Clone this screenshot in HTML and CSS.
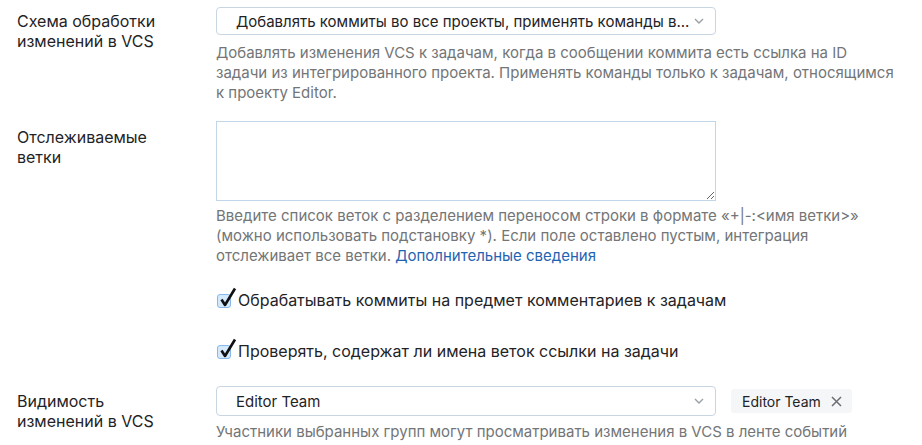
FILE: index.html
```html
<!DOCTYPE html>
<html lang="ru">
<head>
<meta charset="utf-8">
<title>VCS</title>
<link rel="stylesheet" href="styles.css">
</head>
<body>
<div class="form">
  <div class="row">
    <div class="label">Схема обработки изменений в VCS</div>
    <div class="control">
      <div class="select">
        <span class="select-text">Добавлять коммиты во все проекты, применять команды в...</span>
        <svg class="chevron" width="10" height="6" viewBox="0 0 10 6"><path d="M1 1l4 4 4-4" fill="none" stroke="#9aa0a6" stroke-width="1.4"/></svg>
      </div>
      <div class="help">Добавлять изменения VCS к задачам, когда в сообщении коммита есть ссылка на ID<br>задачи из интегрированного проекта. Применять команды только к задачам, относящимся<br>к проекту Editor.</div>
    </div>
  </div>

  <div class="row row-branches">
    <div class="label label-branches">Отслеживаемые ветки</div>
    <div class="control">
      <textarea class="textarea"></textarea>
      <div class="help help-tight">Введите список веток с разделением переносом строки в формате «+|-:&lt;имя ветки&gt;»<br>(можно использовать подстановку *). Если поле оставлено пустым, интеграция<br>отслеживает все ветки. <a class="link" href="#">Дополнительные сведения</a></div>
    </div>
  </div>

  <div class="row row-check1">
    <div class="label"></div>
    <div class="control">
      <div class="check">
        <svg class="checkbox" width="22" height="22" viewBox="0 0 22 22"><rect x="1.5" y="7.5" width="13" height="13" rx="2.5" fill="#d4e9fc" stroke="#86b8ea"/><path d="M5.5 12.5l3.5 5.5 10-16.5" fill="none" stroke="#111" stroke-width="2.6" stroke-linejoin="round"/></svg>
        <span>Обрабатывать коммиты на предмет комментариев к задачам</span>
      </div>
    </div>
  </div>

  <div class="row row-check2">
    <div class="label"></div>
    <div class="control">
      <div class="check">
        <svg class="checkbox" width="22" height="22" viewBox="0 0 22 22"><rect x="1.5" y="7.5" width="13" height="13" rx="2.5" fill="#d4e9fc" stroke="#86b8ea"/><path d="M5.5 12.5l3.5 5.5 10-16.5" fill="none" stroke="#111" stroke-width="2.6" stroke-linejoin="round"/></svg>
        <span>Проверять, содержат ли имена веток ссылки на задачи</span>
      </div>
    </div>
  </div>

  <div class="row row-visibility">
    <div class="label">Видимость изменений в VCS</div>
    <div class="control">
      <div class="inline">
        <div class="select select-tall">
          <span class="select-text">Editor Team</span>
          <svg class="chevron" width="10" height="6" viewBox="0 0 10 6"><path d="M1 1l4 4 4-4" fill="none" stroke="#9aa0a6" stroke-width="1.4"/></svg>
        </div>
        <div class="tag">Editor Team <svg class="tag-x" width="11" height="11" viewBox="0 0 11 11"><path d="M1 1l9 9M10 1l-9 9" stroke="#6b6f73" stroke-width="1.5"/></svg></div>
      </div>
      <div class="help help-last">Участники выбранных групп могут просматривать изменения в VCS в ленте событий</div>
    </div>
  </div>
</div>
</body>
</html>
```

FILE: styles.css
```css
html, body {
  margin: 0;
  padding: 0;
  background: #ffffff;
}

body {
  font-family: Inter, "Noto Sans", "Liberation Sans", sans-serif;
  font-size: 15px;
  color: #1f2326;
  overflow: hidden;
}

.form {
  padding: 7px 0 0 17px;
}

.row {
  display: flex;
  align-items: flex-start;
}

.label {
  width: 150px;
  margin-right: 49px;
  font-size: 16px;
  line-height: 20px;
  padding-top: 4px;
  color: #1f2326;
}

.control {
  display: flex;
  flex-direction: column;
}

.select {
  width: 500px;
  height: 28px;
  box-sizing: border-box;
  border: 1px solid #c8d6e4;
  border-radius: 4px;
  display: flex;
  align-items: center;
  padding: 0 11px 0 19px;
  background: #fff;
}

.select-tall {
  height: 30px;
}

.select-text {
  flex: 1;
  min-width: 0;
  white-space: nowrap;
  padding-right: 8px;
  font-size: 15px;
  color: #1f2326;
}

.chevron {
  flex: none;
}

.help {
  color: #737577;
  font-size: 15px;
  line-height: 20px;
  margin-top: 8px;
  white-space: nowrap;
}

.help-tight {
  margin-top: 5px;
}

.help-last {
  margin-top: 6px;
}

.link {
  color: #1f63b1;
  text-decoration: none;
}

.row-branches {
  margin-top: 18px;
}

.label-branches {
  padding-top: 6px;
}

.textarea {
  display: block;
  width: 500px;
  height: 80px;
  box-sizing: border-box;
  border: 1px solid #c2d6ea;
  border-radius: 0;
  margin: 0;
  padding: 4px;
  resize: vertical;
  outline: none;
  font: inherit;
}

.row-check1 {
  margin-top: 20px;
}

.row-check2 {
  margin-top: 27px;
}

.check {
  display: flex;
  align-items: flex-end;
  font-size: 16px;
  line-height: 20px;
  height: 24px;
}

.checkbox {
  flex: none;
  margin-right: 0;
  margin-bottom: 1px;
}

.row-visibility {
  margin-top: 25px;
}

.row-visibility .label {
  padding-top: 5px;
}

.inline {
  display: flex;
  align-items: center;
}

.tag {
  margin-left: 15px;
  height: 24px;
  padding: 0 10px 0 11px;
  display: flex;
  align-items: center;
  gap: 10px;
  background: #f4f6f8;
  border-radius: 3px;
  font-size: 14px;
  color: #1f2326;
}

.tag-x {
  flex: none;
}
```
